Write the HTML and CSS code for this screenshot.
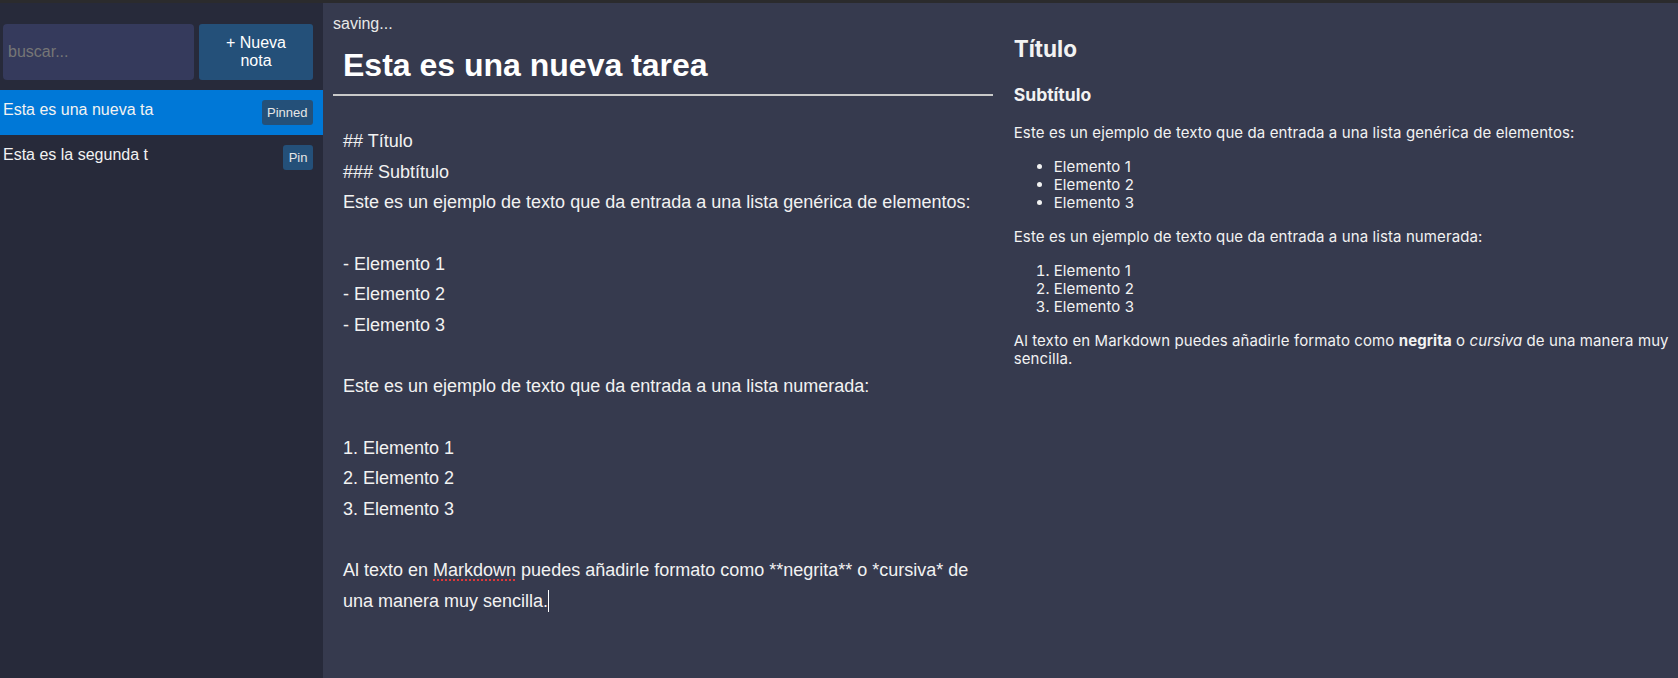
FILE: index.html
```html
<!DOCTYPE html>
<html lang="es">
<head>
<meta charset="utf-8">
<title>Notas</title>
<link rel="stylesheet" href="styles.css">
</head>
<body>
<div class="topbar"></div>
<div class="app">
  <aside class="sidebar">
    <div class="search-bar">
      <input class="search" type="text" placeholder="buscar...">
      <button class="new-btn">+ Nueva nota</button>
    </div>
    <ul class="note-list">
      <li class="note active"><span class="note-title">Esta es una nueva ta</span><button class="pin">Pinned</button></li>
      <li class="note"><span class="note-title">Esta es la segunda t</span><button class="pin">Pin</button></li>
    </ul>
  </aside>
  <main class="workspace">
    <section class="editor">
      <div class="status">saving...</div>
      <input class="title-input" type="text" value="Esta es una nueva tarea">
      <div class="editor-body">## Título
### Subtítulo
Este es un ejemplo de texto que da entrada a una lista genérica de elementos:

- Elemento 1
- Elemento 2
- Elemento 3

Este es un ejemplo de texto que da entrada a una lista numerada:

1. Elemento 1
2. Elemento 2
3. Elemento 3

Al texto en <span class="misspelled">Markdown</span> puedes añadirle formato como **negrita** o *cursiva* de una manera muy sencilla.<span class="caret"></span></div>
    </section>
    <section class="preview">
      <h2>Título</h2>
      <h3>Subtítulo</h3>
      <p>Este es un ejemplo de texto que da entrada a una lista genérica de elementos:</p>
      <ul>
        <li>Elemento 1</li>
        <li>Elemento 2</li>
        <li>Elemento 3</li>
      </ul>
      <p>Este es un ejemplo de texto que da entrada a una lista numerada:</p>
      <ol>
        <li>Elemento 1</li>
        <li>Elemento 2</li>
        <li>Elemento 3</li>
      </ol>
      <p>Al texto en Markdown puedes añadirle formato como <strong>negrita</strong> o <em>cursiva</em> de una manera muy sencilla.</p>
    </section>
  </main>
</div>
</body>
</html>
```

FILE: styles.css
```css
* { box-sizing: border-box; }

html, body {
  margin: 0;
  padding: 0;
  height: 100%;
}

body {
  background: #363a4e;
  font-family: "Liberation Sans", Arial, sans-serif;
  color: #f2f2f2;
  display: flex;
  flex-direction: column;
  overflow: hidden;
}

.topbar {
  height: 3px;
  background: #2b2b2d;
  flex: none;
}

.app {
  flex: 1;
  display: flex;
  min-height: 0;
}

.sidebar {
  width: 323px;
  flex: none;
  background: #272a3a;
}

.search-bar {
  display: flex;
  gap: 5px;
  padding: 21px 10px 10px 3px;
}

.search {
  flex: 1;
  min-width: 0;
  height: 56px;
  border: none;
  border-radius: 4px;
  background: #353a5c;
  color: #f2f2f2;
  font-family: "Liberation Sans", Arial, sans-serif;
  font-size: 16px;
  padding: 0 5px;
  outline: none;
}

.search::placeholder { color: #767676; }

.new-btn {
  width: 114px;
  height: 56px;
  flex: none;
  border: none;
  border-radius: 3px;
  background: #245079;
  color: #ffffff;
  font-family: "Liberation Sans", Arial, sans-serif;
  font-size: 16px;
  padding: 0 12px;
}

.note-list {
  list-style: none;
  margin: 0;
  padding: 0;
}

.note {
  display: flex;
  justify-content: space-between;
  align-items: flex-start;
  padding: 10px 10px 10px 3px;
  font-size: 16px;
  color: #f2f2f2;
}

.note-title { margin-top: 1px; }

.note.active { background: #0078d7; }

.pin {
  border: none;
  border-radius: 3px;
  background: #245079;
  color: #e6e6e6;
  font-family: "Liberation Sans", Arial, sans-serif;
  font-size: 13px;
  line-height: 15px;
  padding: 5px 5.5px;
}

.workspace {
  flex: 1;
  display: flex;
  min-width: 0;
}

.editor {
  flex: 1 1 0;
  min-width: 0;
  padding: 12px 8px 0 10px;
}

.status {
  font-size: 16px;
  color: #e8e8e8;
}

.title-input {
  display: block;
  width: 100%;
  margin-top: 4px;
  padding: 10px;
  border: none;
  border-bottom: 2px solid #c9c9c9;
  background: transparent;
  color: #ffffff;
  font-family: "Liberation Sans", Arial, sans-serif;
  font-size: 32px;
  font-weight: bold;
  outline: none;
}

.editor-body {
  margin-top: 20px;
  padding: 10px;
  white-space: pre-wrap;
  font-size: 18px;
  line-height: 30.65px;
  color: #f2f2f2;
}

.misspelled {
  text-decoration: underline dotted #e0383a;
  text-decoration-thickness: 2px;
  text-underline-offset: 3px;
}

.caret {
  display: inline-block;
  width: 1px;
  height: 22px;
  background: #ffffff;
  vertical-align: -5px;
}

.preview {
  flex: 1 1 0;
  min-width: 0;
  padding: 13px 4px 0 12.5px;
  font-family: Inter, "Noto Sans", sans-serif;
  font-size: 15px;
  line-height: 18.2px;
  letter-spacing: 0.1px;
  color: #f2f2f2;
}

.preview h2 {
  font-size: 22.5px;
  line-height: 27px;
  margin: 18.7px 0 20.2px;
  font-weight: 700;
  letter-spacing: 0;
}

.preview h3 {
  font-size: 17.55px;
  line-height: 26px;
  margin: 17.55px 0 16px;
  font-weight: 700;
  letter-spacing: 0;
}

.preview p { margin: 15.6px 0; }

.preview ul, .preview ol {
  margin: 15.6px 0;
  padding-left: 40px;
}
```
